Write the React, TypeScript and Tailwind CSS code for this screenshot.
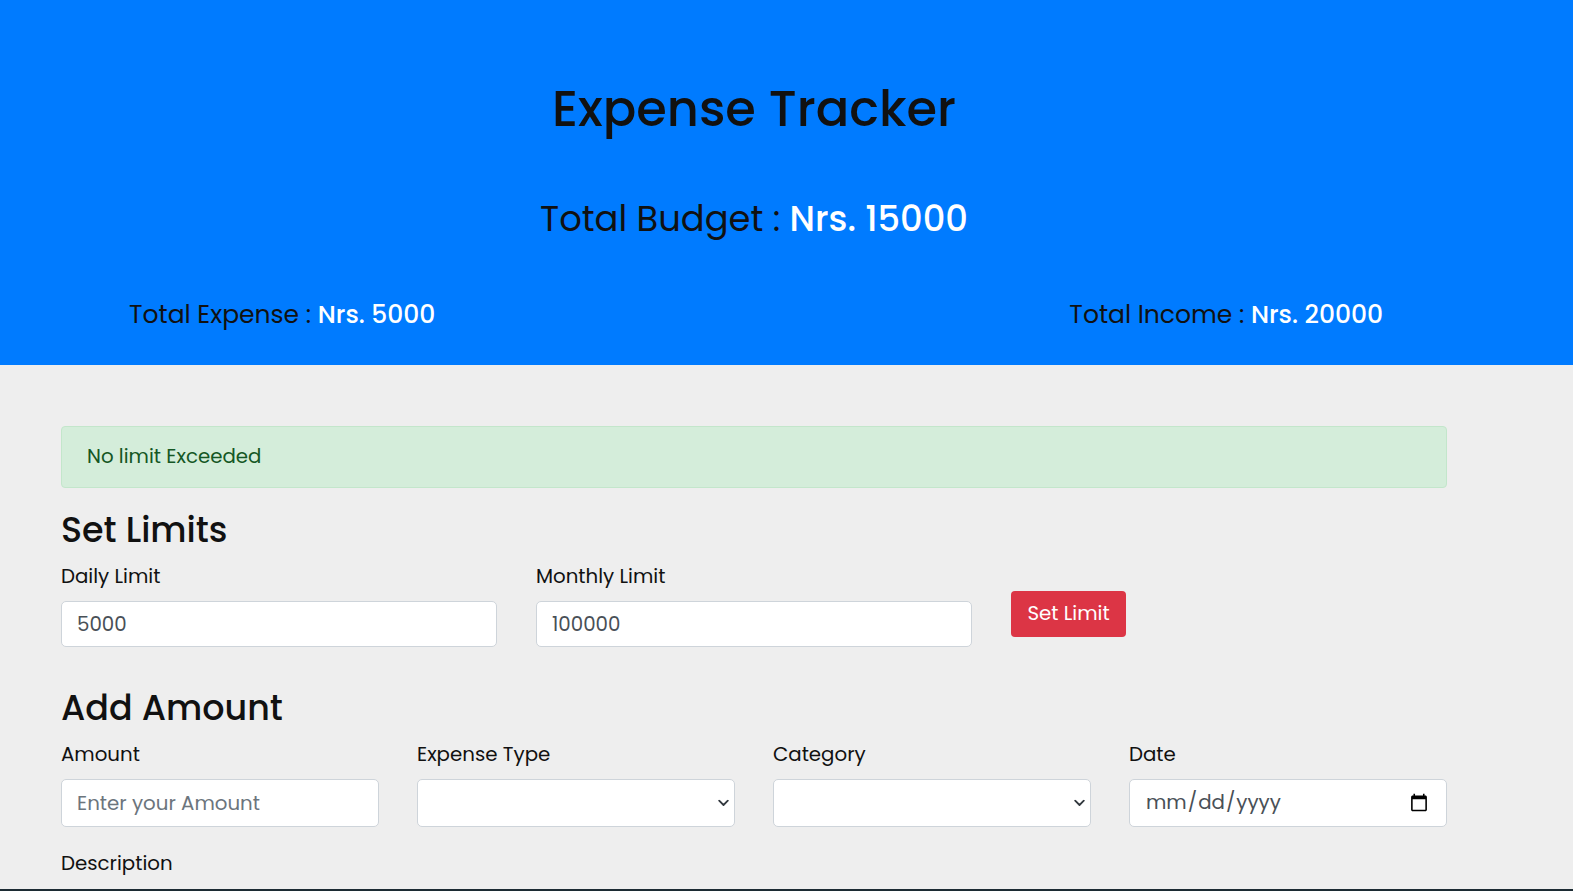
import React from "react";

const font = { fontFamily: "Poppins, Inter, 'Noto Sans', sans-serif" };

function Chevron() {
  return (
    <svg width="11" height="7" viewBox="0 0 11 7" className="pointer-events-none absolute right-[6px] top-1/2 -translate-y-1/2">
      <path d="M1.2 1.2l4.3 4.3 4.3-4.3" fill="none" stroke="#343a40" strokeWidth="1.8" strokeLinecap="round" strokeLinejoin="round" />
    </svg>
  );
}

const inputCls =
  "w-full rounded-[5px] border border-[#ced4da] bg-white px-[15px] text-[19.8px] text-[#495057] outline-none";

export default function App() {
  return (
    <div className="min-h-[891px] bg-[#eeeeee] text-[#111111]" style={font}>
      <header className="bg-[#007bff] pt-[79px] pb-[32px]">
        <div className="ml-[61px] w-[1386px]">
          <h1 className="h-[60px] text-center text-[49.5px] font-medium leading-[60px] text-[#111111]">Expense Tracker</h1>
          <div className="mt-[55px] h-[50px] text-center text-[35.3px] leading-[50px] text-[#111111]">
            Total Budget : <span className="font-medium text-white">Nrs. 15000</span>
          </div>
          <div className="mt-[53px] flex h-[36px] items-center justify-between pl-[68px] pr-[64px] text-[25px] leading-[36px]">
            <div>
              Total Expense : <span className="font-medium text-white">Nrs. 5000</span>
            </div>
            <div>
              Total Income : <span className="font-medium text-white">Nrs. 20000</span>
            </div>
          </div>
        </div>
      </header>

      <main className="ml-[61px] w-[1386px] pt-[61px]">
        <div className="flex h-[62px] items-center rounded-[4px] border border-[#c3e6cb] bg-[#d4edda] px-[25px] text-[19.8px] text-[#155724]">
          No limit Exceeded
        </div>

        <h2 className="mt-[22px] h-[40px] text-[34.9px] font-medium leading-[40px]">Set Limits</h2>

        <div className="mt-[13px] grid grid-cols-3 gap-x-[39px]">
          <div>
            <label className="block h-[26px] text-[19.8px] leading-[26px]">Daily Limit</label>
            <input readOnly value="5000" className={"mt-[12px] h-[46px] " + inputCls} />
          </div>
          <div>
            <label className="block h-[26px] text-[19.8px] leading-[26px]">Monthly Limit</label>
            <input readOnly value="100000" className={"mt-[12px] h-[46px] " + inputCls} />
          </div>
          <div className="pt-[28px]">
            <button className="h-[46px] w-[115px] rounded-[4px] bg-[#dc3545] text-[19.8px] text-white">Set Limit</button>
          </div>
        </div>

        <h2 className="mt-[39px] h-[44px] text-[34.9px] font-medium leading-[44px]">Add Amount</h2>

        <div className="mt-[11px] grid grid-cols-4 gap-x-[38px]">
          <div>
            <label className="block h-[26px] text-[19.8px] leading-[26px]">Amount</label>
            <input placeholder="Enter your Amount" className={"mt-[12px] h-[48px] placeholder:text-[#6c757d] " + inputCls} />
          </div>
          <div>
            <label className="block h-[26px] text-[19.8px] leading-[26px]">Expense Type</label>
            <div className="relative mt-[12px]">
              <select className={"h-[48px] appearance-none " + inputCls}>
                <option></option>
              </select>
              <Chevron />
            </div>
          </div>
          <div>
            <label className="block h-[26px] text-[19.8px] leading-[26px]">Category</label>
            <div className="relative mt-[12px]">
              <select className={"h-[48px] appearance-none " + inputCls}>
                <option></option>
              </select>
              <Chevron />
            </div>
          </div>
          <div>
            <label className="block h-[26px] text-[19.8px] leading-[26px]">Date</label>
            <input type="date" className={"mt-[12px] h-[48px] " + inputCls} />
          </div>
        </div>

        <label className="mt-[23px] block h-[26px] text-[19.8px] leading-[26px]">Description</label>
        <textarea className="mt-[13px] block h-[100px] w-full rounded-[5px] border border-[#ced4da] bg-white outline-none" />
      </main>

      <div className="fixed bottom-0 left-0 right-0 h-[2px] bg-[#1c2b33]" />
    </div>
  );
}
